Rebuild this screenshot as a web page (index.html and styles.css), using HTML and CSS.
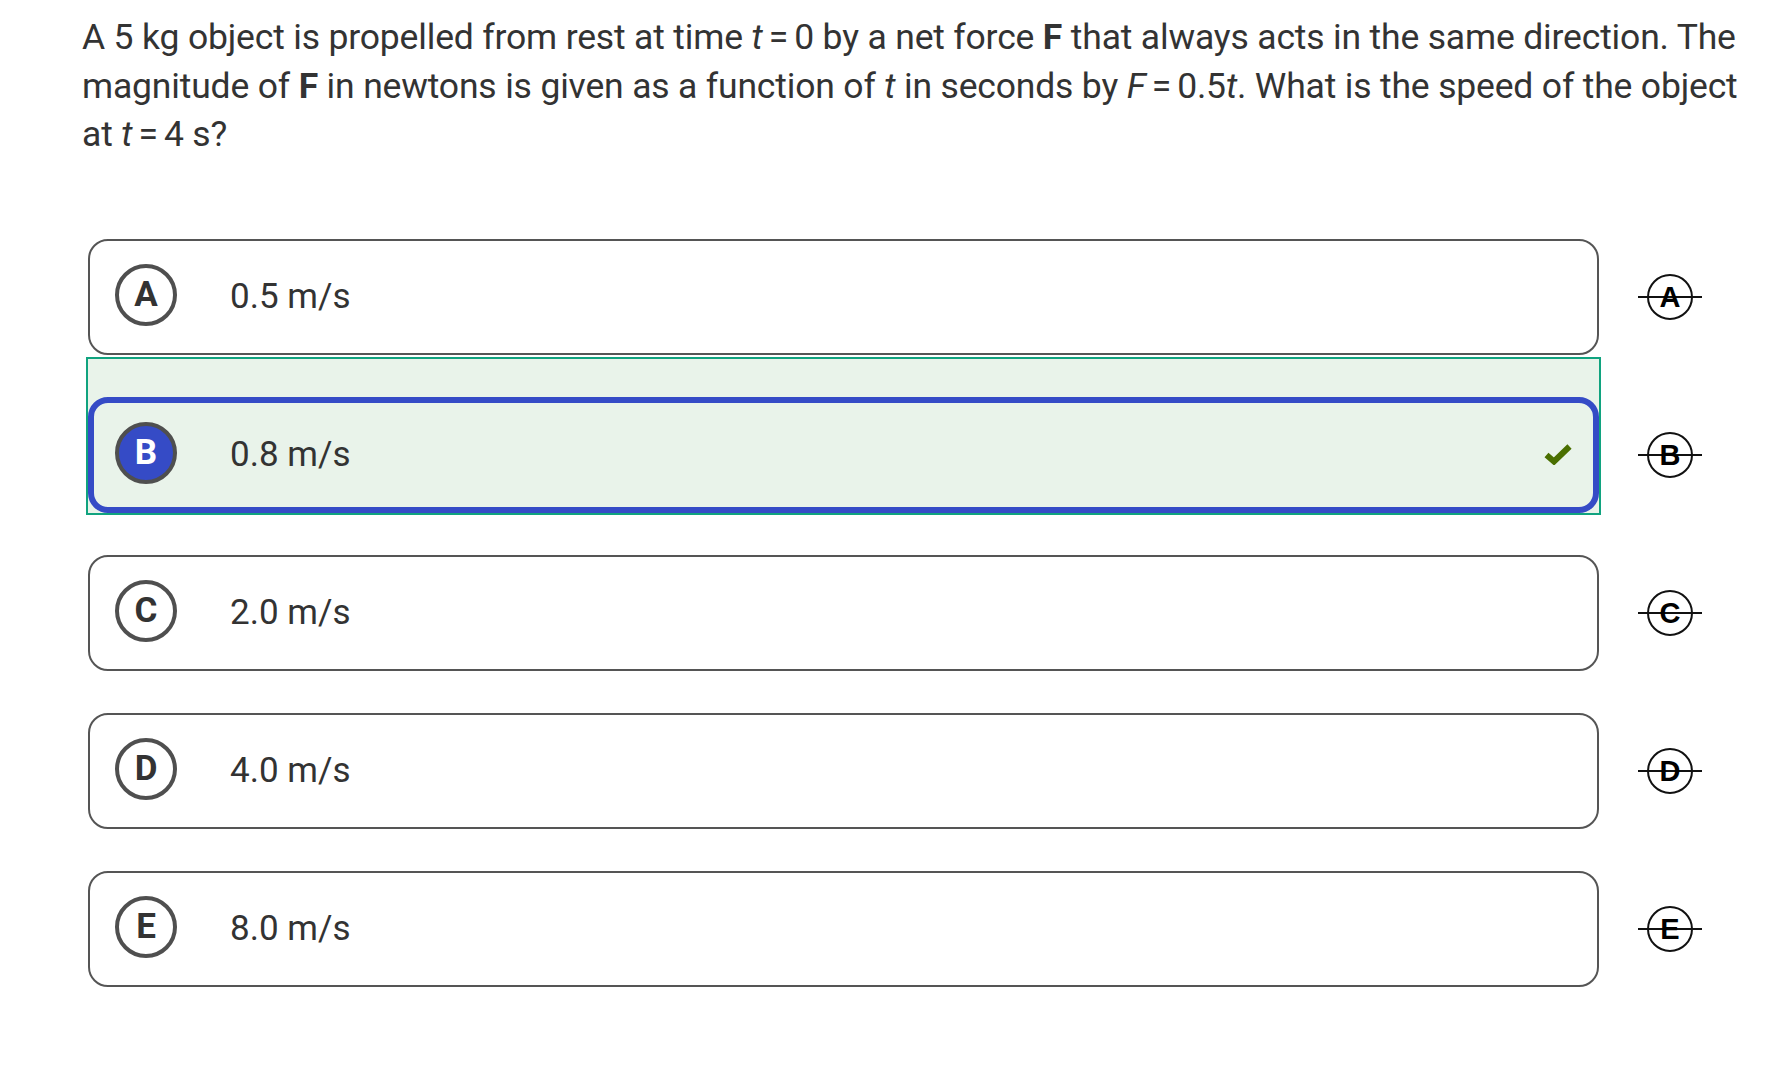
FILE: index.html
```html
<!DOCTYPE html>
<html lang="en">
<head>
<meta charset="utf-8">
<title>Question</title>
<link rel="stylesheet" href="styles.css">
</head>
<body>
<div class="question">
  A 5 kg object is propelled from rest at time <span class="math"><i>t</i> = 0</span> by a net force <b>F</b> that always acts in the same direction. The<br>
  magnitude of <b>F</b> in newtons is given as a function of <i>t</i> in seconds by <span class="math"><i>F</i> = 0.5<i>t</i></span>. What is the speed of the object<br>
  at <span class="math"><i>t</i> = 4</span> s?
</div>
<div class="options">
  <div class="row">
    <div class="wrap">
      <div class="card"><span class="letter">A</span><span class="answer">0.5 m/s</span></div>
    </div>
    <div class="cross"><span class="cross-letter">A</span></div>
  </div>
  <div class="row">
    <div class="wrap correct">
      <div class="card selected"><span class="letter">B</span><span class="answer">0.8 m/s</span>
        <svg class="check" width="28" height="22" viewBox="0 0 28 22"><path d="M2.5 12 L10 18.5 L25.5 3.5" fill="none" stroke="#4a6f00" stroke-width="6"/></svg>
      </div>
    </div>
    <div class="cross"><span class="cross-letter">B</span></div>
  </div>
  <div class="row">
    <div class="wrap">
      <div class="card"><span class="letter">C</span><span class="answer">2.0 m/s</span></div>
    </div>
    <div class="cross"><span class="cross-letter">C</span></div>
  </div>
  <div class="row">
    <div class="wrap">
      <div class="card"><span class="letter">D</span><span class="answer">4.0 m/s</span></div>
    </div>
    <div class="cross"><span class="cross-letter">D</span></div>
  </div>
  <div class="row">
    <div class="wrap">
      <div class="card"><span class="letter">E</span><span class="answer">8.0 m/s</span></div>
    </div>
    <div class="cross"><span class="cross-letter">E</span></div>
  </div>
</div>
</body>
</html>
```
FILE: styles.css
```css
html, body {
  margin: 0;
  padding: 0;
  background: #ffffff;
}
body {
  font-family: Roboto, "Liberation Sans", sans-serif;
  color: #333333;
}
.question {
  padding: 13px 20px 0 82px;
  font-size: 35.5px;
  letter-spacing: -0.17px;
  line-height: 48.7px;
  white-space: nowrap;
}
.question b {
  font-weight: 700;
}
.math {
  word-spacing: -2.5px;
}
.options {
  margin-top: 40px;
  padding-left: 86px;
  display: flex;
  flex-direction: column;
}
.row {
  display: flex;
  align-items: flex-end;
}
.wrap {
  width: 1515px;
  box-sizing: border-box;
  border: 2px solid transparent;
  padding-top: 38px;
}
.wrap.correct {
  border-color: #10a37f;
  background: #e9f3ea;
}
.card {
  height: 116px;
  box-sizing: border-box;
  border: 2px solid #555555;
  border-radius: 20px;
  background: #ffffff;
  display: flex;
  align-items: center;
  padding: 0 0 5px 25px;
}
.card.selected {
  border: 6px solid #354bc6;
  background: #e9f3ea;
  padding-left: 21px;
}
.letter {
  width: 62px;
  height: 62px;
  box-sizing: border-box;
  border: 4px solid #4f4f4f;
  border-radius: 50%;
  display: flex;
  align-items: center;
  justify-content: center;
  font-weight: 700;
  font-size: 35px;
  color: #333333;
  flex: none;
}
.selected .letter {
  background: #354bc6;
  color: #ffffff;
}
.answer {
  margin-left: 53px;
  margin-top: 4px;
  font-size: 35px;
  color: #333333;
}
.check {
  margin-left: auto;
  margin-right: 21px;
  margin-top: 2px;
}
.cross {
  width: 64px;
  height: 116px;
  margin-left: 37px;
  margin-bottom: 2px;
  display: flex;
  align-items: center;
  justify-content: center;
  position: relative;
  flex: none;
}
.cross::before {
  content: "";
  position: absolute;
  left: 0;
  right: 0;
  top: 57px;
  height: 2px;
  background: #111111;
}
.cross-letter {
  width: 46px;
  height: 46px;
  box-sizing: border-box;
  border: 2px solid #111111;
  border-radius: 50%;
  display: flex;
  align-items: center;
  justify-content: center;
  font-family: "Liberation Sans", Arial, sans-serif;
  font-weight: 700;
  font-size: 29px;
  color: #000000;
  position: relative;
}
```
